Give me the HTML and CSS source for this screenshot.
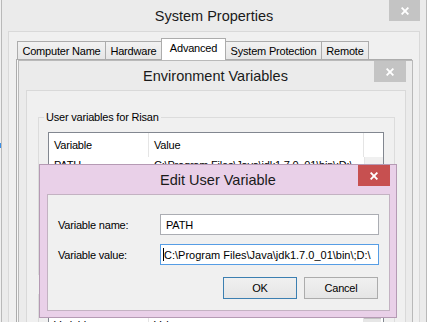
FILE: index.html
```html
<!DOCTYPE html>
<html lang="en">
<head>
    <meta charset="UTF-8">
    <title>Environment Variables</title>
    <link rel="stylesheet" href="styles.css">
</head>
<body>
    <div class="desk-mark"></div>

    <!-- System Properties (back window) -->
    <div class="win win-sys">
        <div class="titlebar">
            <span class="title">System Properties</span>
            <span class="close close-gray"><svg viewBox="0 0 8 8"><path d="M0.6 0.6 L7.4 7.4 M7.4 0.6 L0.6 7.4"/></svg></span>
        </div>
        <div class="client sys-client">
            <div class="tabs">
                <div class="tab tab-cn">Computer Name</div>
                <div class="tab tab-hw">Hardware</div>
                <div class="tab tab-adv active">Advanced</div>
                <div class="tab tab-sp">System Protection</div>
                <div class="tab tab-rm">Remote</div>
            </div>
            <div class="tab-page"></div>
        </div>
    </div>

    <!-- Environment Variables -->
    <div class="win win-env">
        <div class="titlebar">
            <span class="title">Environment Variables</span>
            <span class="close close-gray"><svg viewBox="0 0 8 8"><path d="M0.6 0.6 L7.4 7.4 M7.4 0.6 L0.6 7.4"/></svg></span>
        </div>
        <div class="client env-client">
            <div class="group group-user">
                <div class="group-label">User variables for Risan</div>
                <div class="list list-user">
                    <div class="list-head">
                        <span class="col-var">Variable</span>
                        <span class="col-val">Value</span>
                        <span class="col-sb"></span>
                    </div>
                    <div class="list-row">
                        <span class="col-var">PATH</span>
                        <span class="col-val">C:\Program Files\Java\jdk1.7.0_01\bin\;D:\</span>
                        <span class="col-sb"></span>
                    </div>
                    <div class="list-row">
                        <span class="col-var">TEMP</span>
                        <span class="col-val">%USERPROFILE%\AppData\Local\Temp</span>
                        <span class="col-sb"></span>
                    </div>
                </div>
                <div class="btn-row">
                    <span class="btn">New...</span>
                    <span class="btn">Edit...</span>
                    <span class="btn">Delete</span>
                </div>
            </div>
            <div class="group group-sys">
                <div class="group-label">System variables</div>
                <div class="list list-sys">
                    <div class="list-head">
                        <span class="col-var">Variable</span>
                        <span class="col-val">Value</span>
                        <span class="col-sb"><span class="sb-arrow"></span></span>
                    </div>
                </div>
            </div>
        </div>
    </div>

    <!-- Edit User Variable (active dialog) -->
    <div class="win win-edit">
        <div class="titlebar">
            <span class="title">Edit User Variable</span>
            <span class="close close-red"><svg viewBox="0 0 8 8"><path d="M0.6 0.6 L7.4 7.4 M7.4 0.6 L0.6 7.4"/></svg></span>
        </div>
        <div class="client edit-client">
            <div class="field field-first">
                <span class="field-label">Variable name:</span>
                <span class="input">PATH</span>
            </div>
            <div class="field">
                <span class="field-label">Variable value:</span>
                <span class="input input-focus"><span class="caret"></span><span class="input-text">C:\Program Files\Java\jdk1.7.0_01\bin\;D:\</span></span>
            </div>
            <div class="dialog-buttons">
                <span class="btn btn-default">OK</span>
                <span class="btn">Cancel</span>
            </div>
        </div>
    </div>
</body>
</html>
```

FILE: styles.css
```css
/* === BASE === */
* {
    margin: 0;
    padding: 0;
    box-sizing: border-box;
}

body {
    position: relative;
    width: 427px;
    height: 322px;
    overflow: hidden;
    background: #f0f0f0;
    font-family: "Liberation Sans", Arial, sans-serif;
    font-size: 11px;
    letter-spacing: -0.2px;
    color: #000;
}

.desk-mark {
    position: absolute;
    left: 0;
    top: 143px;
    width: 1px;
    height: 5px;
    background: #3a8ee6;
}

/* === WINDOWS === */
.win {
    position: absolute;
    display: flex;
    flex-direction: column;
    overflow: hidden;
    border: 1px solid #b9b9b9;
    background: #ebebeb;
}

.titlebar {
    position: relative;
    display: flex;
    align-items: center;
    justify-content: center;
    flex-shrink: 0;
}

.title {
    font-size: 14.5px;
    letter-spacing: 0;
    color: #1a1a1a;
}

.close {
    position: absolute;
    top: 0;
    right: 6px;
    width: 32px;
    height: 21px;
    display: flex;
    align-items: center;
    justify-content: center;
}

.close svg {
    width: 8px;
    height: 8px;
    stroke: #fff;
    stroke-width: 1.9;
    fill: none;
}

.close-gray { background: #c4c4c4; }
.close-red  { background: #c75050; }

.client {
    flex: 1;
    min-height: 0;
    margin: 0 6px;
    border: 1px solid #d9d9d9;
    border-bottom: none;
    background: #f0f0f0;
}

/* === SYSTEM PROPERTIES === */
.win-sys {
    left: 1px;
    top: -1px;
    width: 426px;
    height: 324px;
    border-bottom: none;
}

.win-sys .titlebar { height: 31px; }
.win-sys .close { width: 31px; }

.tabs {
    display: flex;
    align-items: flex-end;
    margin-top: 6px;
    padding-left: 8px;
}

.tab {
    height: 18px;
    border: 1px solid #acacac;
    border-bottom: none;
    margin-left: -1px;
    background: linear-gradient(#f2f2f2, #e6e6e6);
    display: flex;
    align-items: center;
    justify-content: center;
    padding-top: 1px;
}

.tab:first-child { margin-left: 0; }

.tab.active {
    position: relative;
    z-index: 1;
    height: 22px;
    margin-bottom: -1px;
    background: #fff;
    align-items: flex-start;
    padding-top: 3px;
}

.tab-cn  { width: 89px; }
.tab-hw  { width: 57px; }
.tab-adv { width: 65px; }
.tab-sp  { width: 97px; }
.tab-rm  { width: 48px; }

.tab-page {
    margin-left: 7px;
    width: 396px;
    height: 270px;
    border: 1px solid #acacac;
    background: #f8f8f8;
}

/* === ENVIRONMENT VARIABLES === */
.win-env {
    left: 18px;
    top: 60px;
    width: 395px;
    height: 262px;
    border-bottom: none;
}

.win-env .titlebar { height: 29px; }

.env-client {
    margin: 0 6px 0 7px;
    overflow: hidden;
}

.group {
    margin-left: 11px;
    width: 357px;
    border: 1px solid #dcdcdc;
    padding: 0 10px 9px 9px;
}

.group-user { margin-top: 26px; }
.group-sys  { margin-top: 19px; }

.group-label {
    width: fit-content;
    margin: -7px 0 0 -4px;
    padding: 0 2px;
    line-height: 13px;
    background: #f0f0f0;
}

.list {
    margin-top: 8px;
    width: 336px;
    border: 1px solid #828790;
    background: #fff;
}

.list-user { height: 100px; }
.list-sys  { margin-top: 11px; height: 80px; }

.list-head,
.list-row {
    display: flex;
    white-space: nowrap;
}

.list-head { height: 24px; line-height: 24px; }
.list-row  { height: 17px; line-height: 17px; }

.col-var,
.col-val {
    overflow: hidden;
    padding-left: 5px;
}

.col-var { width: 100px; }
.col-val { width: 215px; }

.list-head .col-var,
.list-head .col-val {
    border-right: 1px solid #e5e5e5;
}

.col-sb {
    flex: 1;
    background: #fff;
}

.list-row .col-sb {
    background: #f0f0f0;
    border-left: 1px solid #e5e5e5;
}

.list-sys .col-sb {
    display: flex;
    flex-direction: column;
    padding: 5px 2px 0 0;
}

.sb-arrow {
    height: 17px;
    border-top: 1px solid #c2c2c2;
    background: #e6e6e6;
}

.btn-row {
    display: flex;
    justify-content: flex-end;
    gap: 7px;
    margin-top: 10px;
}

.btn {
    width: 74px;
    height: 23px;
    border: 1px solid #acacac;
    background: linear-gradient(#f0f0f0, #e5e5e5);
    display: flex;
    align-items: center;
    justify-content: center;
}

/* === EDIT USER VARIABLE === */
.win-edit {
    left: 39px;
    top: 164px;
    width: 358px;
    height: 154px;
    background: #e9d0e8;
    border-color: #b59ab4;
}

.win-edit .titlebar { height: 29px; }

.edit-client {
    flex: none;
    margin: 0 6px 0 7px;
    width: 343px;
    height: 117px;
    border: 1px solid #c3b2c2;
}

.field {
    display: flex;
    align-items: center;
    margin-top: 9px;
}

.field-first { margin-top: 19px; }

.field-label {
    width: 112px;
    padding-left: 10px;
}

.input {
    width: 219px;
    height: 21px;
    border: 1px solid #abadb3;
    background: #fff;
    padding-left: 5px;
    display: flex;
    align-items: center;
    white-space: nowrap;
    overflow: hidden;
}

.input-focus {
    border-color: #569de5;
    padding-left: 2px;
    letter-spacing: 0;
}

.caret {
    flex-shrink: 0;
    width: 1px;
    height: 13px;
    background: #000;
}

.dialog-buttons {
    display: flex;
    justify-content: flex-end;
    gap: 7px;
    margin-top: 12px;
    padding-right: 11px;
}

.dialog-buttons .btn { height: 22px; }

.btn-default {
    border-color: #3c7fb1;
}
```
